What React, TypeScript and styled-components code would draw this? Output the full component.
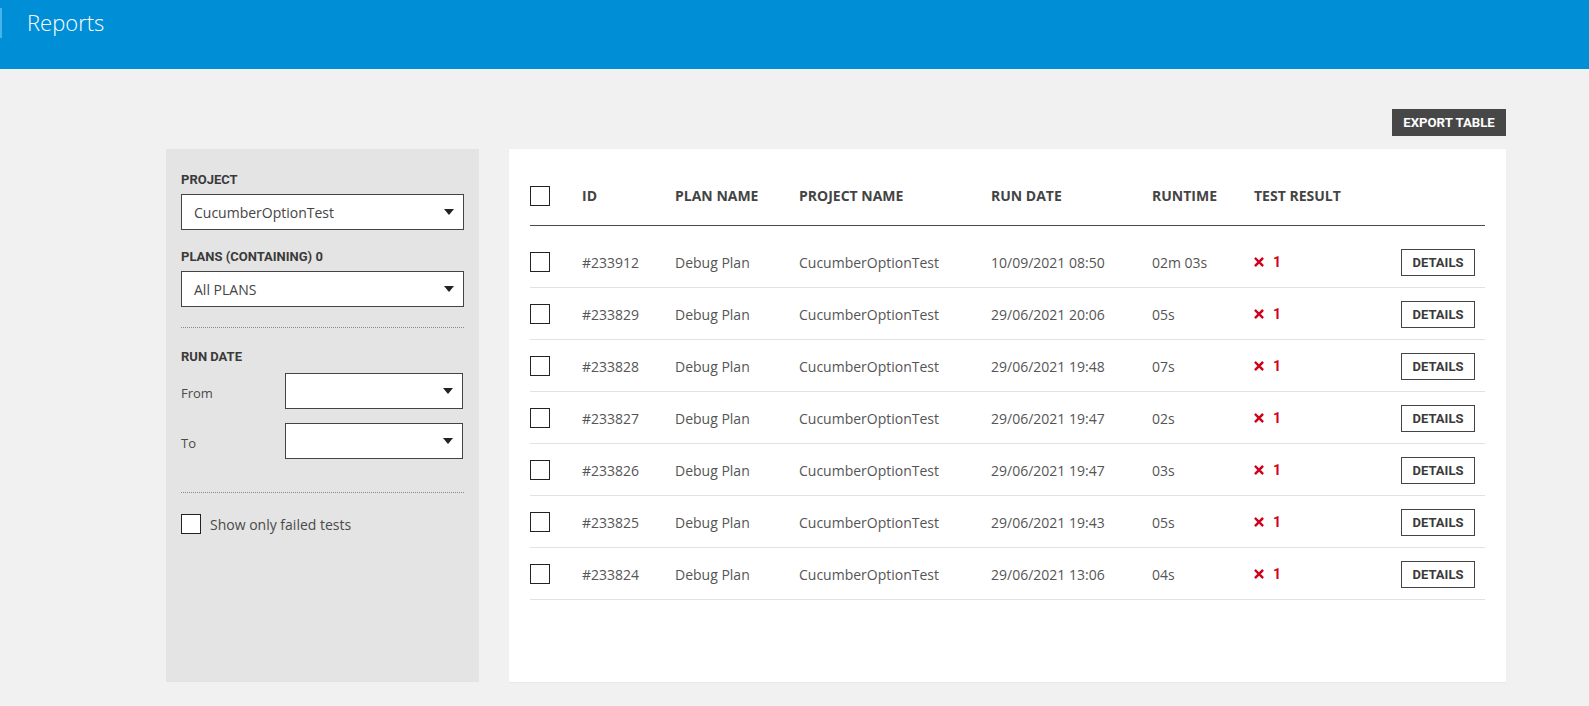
import React from "react";
import styled, { createGlobalStyle } from "styled-components";

const GlobalStyle = createGlobalStyle`
  html, body { margin: 0; padding: 0; background: #f1f1f1; }
  body { font-family: "Open Sans", "Liberation Sans", sans-serif; }
  * { box-sizing: border-box; }
`;

const Page = styled.div`
  min-height: 706px;
  background: #f1f1f1;
`;

const TopBar = styled.header`
  position: relative;
  height: 69px;
  background: #008fd6;
  display: flex;
  align-items: flex-start;
  padding: 7px 0 0 27px;
`;

const Accent = styled.span`
  position: absolute;
  left: 0;
  top: 8px;
  width: 2px;
  height: 30px;
  background: #47b3ec;
`;

const Title = styled.h1`
  margin: 0;
  font-family: "Open Sans", sans-serif;
  font-weight: 300;
  font-size: 22px;
  line-height: 30px;
  color: #fff;
`;

const Content = styled.main`
  padding: 40px 83px 0 166px;
  display: flex;
  flex-direction: column;
`;

const Toolbar = styled.div`
  display: flex;
  justify-content: flex-end;
  margin-bottom: 13px;
`;

const DinText = `
  font-family: "Roboto", "DejaVu Sans Condensed", sans-serif;
  font-weight: 700;
`;

const DarkButton = styled.button`
  ${DinText}
  height: 27px;
  width: 114px;
  padding: 0;
  border: none;
  background: #474747;
  color: #fff;
  font-size: 13.2px;
  cursor: pointer;
`;

const Columns = styled.div`
  display: flex;
  gap: 30px;
  height: 533px;
`;

const Sidebar = styled.aside`
  width: 313px;
  background: #e4e4e4;
  padding: 23px 15px 0 15px;
  display: flex;
  flex-direction: column;
`;

const Label = styled.div<{ $mt?: number }>`
  ${DinText}
  font-size: 13px;
  line-height: 16px;
  color: #3a3a3a;
  margin-top: ${(p) => p.$mt ?? 0}px;
`;

const SelectBox = styled.div<{ $mt?: number; $w?: number }>`
  position: relative;
  height: 36px;
  width: ${(p) => (p.$w ? `${p.$w}px` : "100%")};
  margin-top: ${(p) => p.$mt ?? 0}px;
  background: #fff;
  border: 1px solid #444;
  display: flex;
  align-items: center;
  padding: 0 30px 0 12px;
  font-size: 14px;
  color: #444;
`;

const Caret = styled.span`
  position: absolute;
  right: 9px;
  top: 50%;
  margin-top: -3px;
  width: 0;
  height: 0;
  border-left: 5px solid transparent;
  border-right: 5px solid transparent;
  border-top: 6px solid #222;
`;

const Dotted = styled.hr<{ $mt: number }>`
  margin: ${(p) => p.$mt}px 0 0 0;
  border: none;
  border-top: 1px dotted #8a8a8a;
  height: 0;
`;

const DateRow = styled.div<{ $mt: number }>`
  display: flex;
  align-items: center;
  margin-top: ${(p) => p.$mt}px;
`;

const DateLabel = styled.span`
  width: 104px;
  padding-top: 3px;
  font-size: 13px;
  color: #4a4a4a;
`;

const CheckRow = styled.label`
  display: flex;
  align-items: center;
  gap: 9px;
  margin-top: 21px;
  font-size: 14px;
  color: #4a4a4a;
`;

const Box = styled.span`
  display: inline-block;
  width: 20px;
  height: 20px;
  background: #fff;
  border: 1px solid #222;
  flex: none;
`;

const Card = styled.section`
  flex: 1;
  background: #fff;
  padding: 24px 21px 0 21px;
  box-shadow: 0 1px 1px rgba(0,0,0,0.04);
`;

const GRID = "52px 93px 124px 192px 161px 102px 147px 84px";

const HeadRow = styled.div`
  display: grid;
  grid-template-columns: ${GRID};
  align-items: center;
  height: 53px;
  padding-bottom: 7px;
  border-bottom: 1px solid #4a4a4a;
  margin-bottom: 10px;
`;

const HeadCell = styled.div`
  font-size: 14px;
  font-weight: 700;
  color: #444;
`;

const Row = styled.div`
  display: grid;
  grid-template-columns: ${GRID};
  align-items: center;
  height: 52px;
  padding-top: 1px;
  border-bottom: 1px solid #e2e2e2;
`;

const Cell = styled.div`
  font-size: 14px;
  color: #555;
  white-space: nowrap;
`;

const Fail = styled.div`
  ${DinText}
  display: flex;
  align-items: center;
  gap: 9px;
  color: #d0021b;
  font-size: 14px;
`;

const DetailsButton = styled.button`
  ${DinText}
  width: 74px;
  height: 27px;
  padding: 0;
  background: #fff;
  border: 1px solid #444;
  color: #3a3a3a;
  font-size: 13px;
  cursor: pointer;
`;

const XIcon = () => (
  <svg width="10" height="10" viewBox="0 0 10 10">
    <path d="M1.8 1.8 L8.2 8.2 M8.2 1.8 L1.8 8.2" stroke="#d0021b" strokeWidth="2.4" strokeLinecap="square" />
  </svg>
);

const rows = [
  ["#233912", "10/09/2021 08:50", "02m 03s"],
  ["#233829", "29/06/2021 20:06", "05s"],
  ["#233828", "29/06/2021 19:48", "07s"],
  ["#233827", "29/06/2021 19:47", "02s"],
  ["#233826", "29/06/2021 19:47", "03s"],
  ["#233825", "29/06/2021 19:43", "05s"],
  ["#233824", "29/06/2021 13:06", "04s"],
];

export default function App() {
  return (
    <Page>
      <GlobalStyle />
      <TopBar>
        <Accent />
        <Title>Reports</Title>
      </TopBar>
      <Content>
        <Toolbar>
          <DarkButton>EXPORT TABLE</DarkButton>
        </Toolbar>
        <Columns>
          <Sidebar>
            <Label>PROJECT</Label>
            <SelectBox $mt={6}>
              CucumberOptionTest
              <Caret />
            </SelectBox>
            <Label $mt={19}>PLANS (CONTAINING) 0</Label>
            <SelectBox $mt={6}>
              All PLANS
              <Caret />
            </SelectBox>
            <Dotted $mt={20} />
            <Label $mt={21}>RUN DATE</Label>
            <DateRow $mt={8}>
              <DateLabel>From</DateLabel>
              <SelectBox $w={178}>
                <Caret />
              </SelectBox>
            </DateRow>
            <DateRow $mt={14}>
              <DateLabel>To</DateLabel>
              <SelectBox $w={178}>
                <Caret />
              </SelectBox>
            </DateRow>
            <Dotted $mt={33} />
            <CheckRow>
              <Box />
              Show only failed tests
            </CheckRow>
          </Sidebar>
          <Card>
            <HeadRow>
              <Box />
              <HeadCell>ID</HeadCell>
              <HeadCell>PLAN NAME</HeadCell>
              <HeadCell>PROJECT NAME</HeadCell>
              <HeadCell>RUN DATE</HeadCell>
              <HeadCell>RUNTIME</HeadCell>
              <HeadCell>TEST RESULT</HeadCell>
              <div />
            </HeadRow>
            {rows.map(([id, date, runtime]) => (
              <Row key={id}>
                <Box />
                <Cell>{id}</Cell>
                <Cell>Debug Plan</Cell>
                <Cell>CucumberOptionTest</Cell>
                <Cell>{date}</Cell>
                <Cell>{runtime}</Cell>
                <Fail>
                  <XIcon />
                  1
                </Fail>
                <DetailsButton>DETAILS</DetailsButton>
              </Row>
            ))}
          </Card>
        </Columns>
      </Content>
    </Page>
  );
}
